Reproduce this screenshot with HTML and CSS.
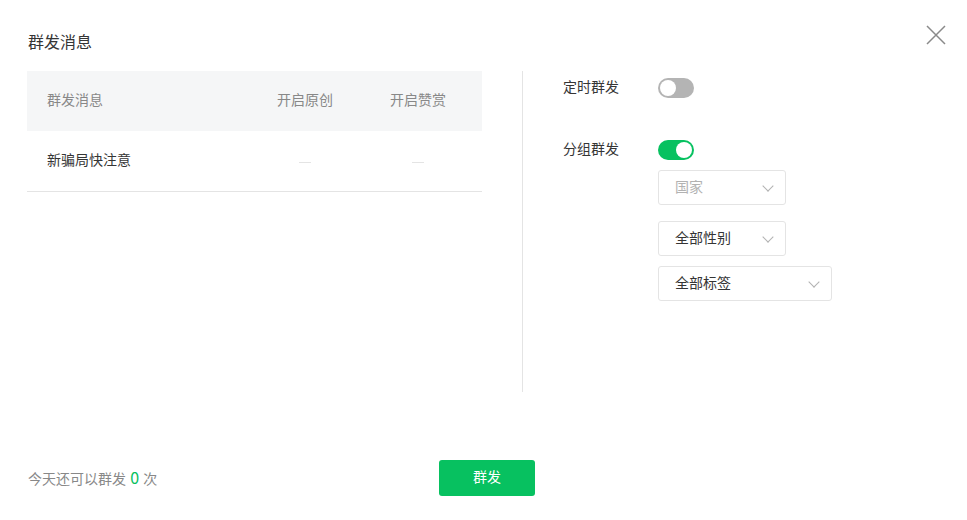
FILE: index.html
```html
<!doctype html>
<html>
    <head>
        <meta charset="utf-8">
        <title>群发消息</title>
        <link rel="stylesheet" href="styles.css">
    </head>
    <body>
    <div class="dialog">
        <a href="javascript:;" class="close">
            <svg width="20" height="20" viewBox="0 0 20 20"><path d="M1 1L19 19M19 1L1 19" stroke="#8a8a8a" stroke-width="1.5" fill="none"/></svg>
        </a>
        <h3 class="title">群发消息</h3>

        <div class="main">
            <div class="left">
                <div class="row head">
                    <span class="c-name">群发消息</span>
                    <span class="c-opt">开启原创</span>
                    <span class="c-opt">开启赞赏</span>
                </div>
                <div class="row item">
                    <span class="c-name">新骗局快注意</span>
                    <span class="c-opt"><i class="dash"></i></span>
                    <span class="c-opt"><i class="dash"></i></span>
                </div>
            </div>

            <div class="right">
                <div class="field">
                    <span class="label">定时群发</span>
                    <span class="switch"></span>
                </div>
                <div class="field field-group">
                    <span class="label">分组群发</span>
                    <span class="switch on"></span>
                </div>
                <div class="selects">
                    <div class="select placeholder first">国家<i class="arrow"></i></div>
                    <div class="select">全部性别<i class="arrow"></i></div>
                    <div class="select wide">全部标签<i class="arrow"></i></div>
                </div>
            </div>
        </div>

        <div class="footer">
            <span class="tip">今天还可以群发 <em>0</em> 次</span>
            <a href="javascript:;" class="btn">群发</a>
        </div>
    </div>
    </body>
</html>
```

FILE: styles.css
```css
body { margin:0; font-family:"Noto Sans CJK SC", "Liberation Sans", sans-serif; font-size:14px; color:#353535; background:#fff; }
.dialog { position:relative; width:967px; height:520px; padding:29px 0 0 27px; box-sizing:border-box; }
.close { position:absolute; top:25px; left:926px; width:20px; height:20px; display:block; }
.close svg { display:block; }
.title { margin:0 0 18px 1px; font-size:16px; font-weight:normal; line-height:24px; color:#353535; }

.main { display:flex; height:321px; }
.left { width:455px; }
.row { display:flex; align-items:center; height:60px; box-sizing:border-box; padding-bottom:4px; }
.row.head { background:#f5f6f7; color:#888; }
.row.item { height:61px; padding-bottom:5px; border-bottom:1px solid #e4e4e4; }
.c-name { width:201px; padding-left:20px; }
.c-opt { width:114px; text-align:center; }
.c-opt:last-child { width:112px; }
.dash { display:inline-block; width:12px; height:1px; background:#e4e4e4; vertical-align:middle; position:relative; top:2px; }

.right { margin-left:40px; border-left:1px solid #e4e4e4; padding-left:40px; padding-top:7px; }
.field { display:flex; align-items:center; height:20px; }
.field-group { margin-top:42px; }
.label { width:95px; color:#353535; padding-bottom:4px; }
.switch { position:relative; width:36px; height:20px; border-radius:10px; background:#b4b4b4; }
.switch:after { content:""; position:absolute; top:2px; left:2px; width:16px; height:16px; border-radius:50%; background:#fff; }
.switch.on { background:#07c160; }
.switch.on:after { left:18px; }

.selects { margin-left:95px; padding-top:10px; }
.select { position:relative; width:128px; height:35px; line-height:31px; box-sizing:border-box; border:1px solid #e4e4e4; border-radius:3px; padding-left:16px; margin-bottom:10px; color:#353535; }
.select.first { margin-bottom:16px; }
.select.placeholder { color:#b2b2b2; }
.select.wide { width:174px; }
.arrow { position:absolute; right:13px; top:11px; width:7px; height:7px; border-right:1px solid #b2b2b2; border-bottom:1px solid #b2b2b2; transform:rotate(45deg); }

.footer { display:flex; align-items:center; margin-top:68px; margin-left:1px; }
.tip { width:411px; color:#888; padding-bottom:3px; }
.tip em { font-style:normal; color:#07c160; font-size:16px; padding:0 1px; }
.btn { display:block; width:96px; height:36px; line-height:32px; text-align:center; background:#07c160; color:#fff; border-radius:3px; text-decoration:none; }
```
